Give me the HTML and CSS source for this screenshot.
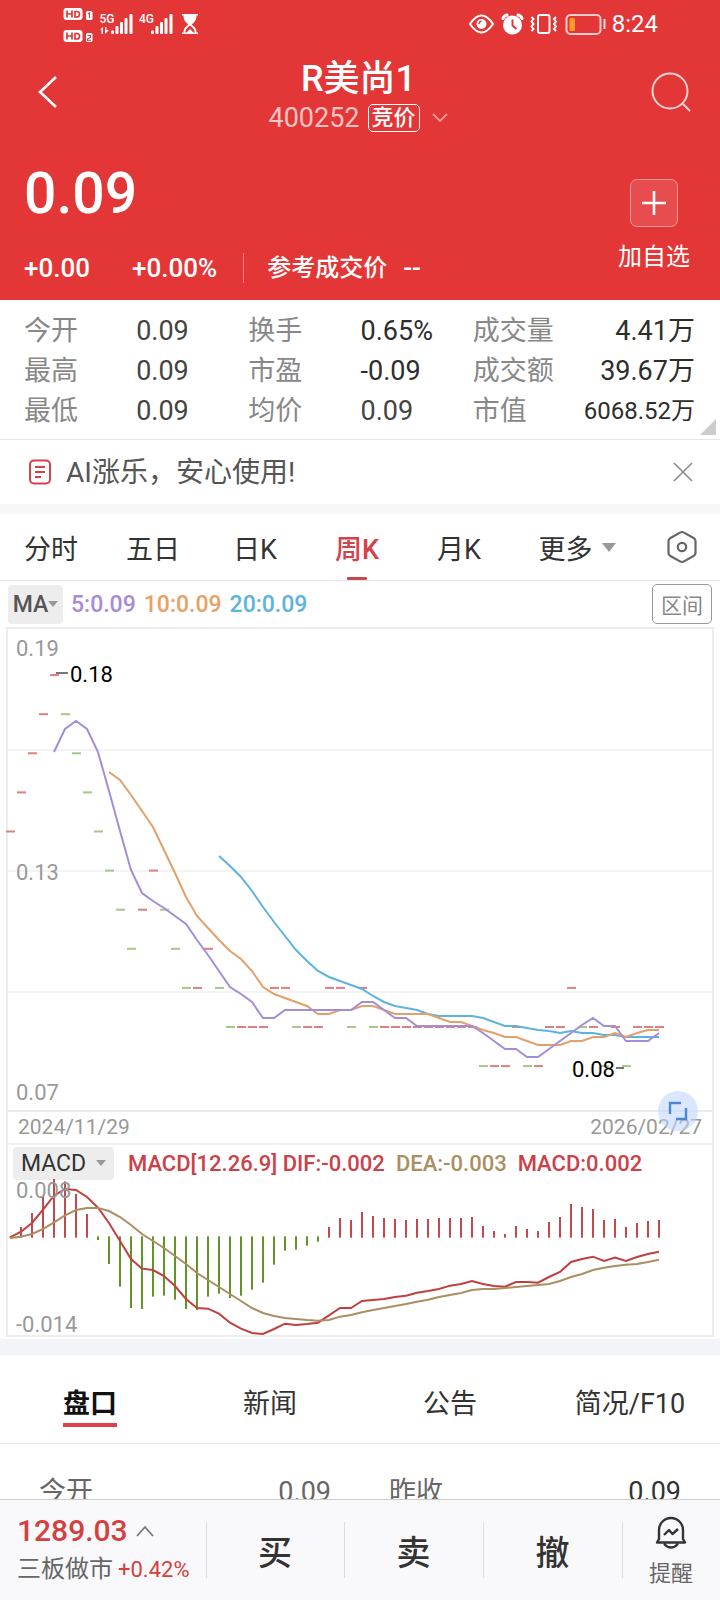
FILE: index.html
```html
<!DOCTYPE html>
<html lang="zh-CN">
<head>
<meta charset="utf-8">
<meta name="viewport" content="width=device-width, initial-scale=1">
<title>R美尚1 400252</title>
<link rel="stylesheet" href="styles.css">
</head>
<body>
<div class="app">
  <main class="content">
    <header class="hero">
      <div class="status">
        <svg class="status-left" width="136" height="40" viewBox="62 4 136 40" fill="#fff" role="img" aria-label="信号">
          <rect x="63.500" y="8" width="19" height="12" rx="3"/><rect x="63.500" y="30" width="19" height="12" rx="3"/>
          <path d="M67 10.500v7M72 10.500v7M67 14h5M75 11.500v5.500h1.500q3 0 3-2.800t-3-2.700zM67 32.500v7M72 32.500v7M67 36h5M75 33.500v5.500h1.500q3 0 3-2.800t-3-2.700z" fill="none" stroke="#e33637" stroke-width="1.700"/>
          <rect x="86" y="11" width="6.500" height="9" rx="1.500"/><rect x="86" y="33" width="6.500" height="9" rx="1.500"/>
          <path d="M88 14l1.500-1v5M87.500 35.500h3v2l-3 1.500v1.200h3.500" fill="none" stroke="#e33637" stroke-width="1.100"/>
          <text x="99.500" y="23" class="net">5G</text><text x="139" y="23" class="net">4G</text>
          <path d="M100 29.500l3-2.500v7h-1.500v-4.500zM105 27h1.500v3h2.500l-4 4z"/>
          <g><rect x="111" y="30.500" width="3" height="3.500" rx="1"/><rect x="115.500" y="26" width="3" height="8" rx="1"/><rect x="120" y="22" width="3" height="12" rx="1"/><rect x="124.500" y="18" width="3" height="16" rx="1"/><rect x="129.500" y="14" width="3" height="20" rx="1"/></g>
          <g><rect x="151" y="30.500" width="3" height="3.500" rx="1"/><rect x="155.500" y="26" width="3" height="8" rx="1"/><rect x="160" y="22" width="3" height="12" rx="1"/><rect x="164.500" y="18" width="3" height="16" rx="1"/><rect x="169.500" y="14" width="3" height="20" rx="1"/></g>
          <path d="M182 14h16v1.500h-1.500c0 5-2.500 7-4.800 9 2.300 2 4.800 3.500 4.800 8h1.500v1.500h-16v-1.500h1.500c0-4.500 2.500-6 4.800-8-2.300-2-4.800-4-4.800-9h-1.500z"/>
          <path d="M190 25.500c-2.500 2-4.500 3.500-4.800 7h1.300l3.500-3.500 3.500 3.500h1.300c-.3-3.500-2.300-5-4.800-7z" fill="#e33637"/>
        </svg>
        <div class="status-right">
          <svg width="140" height="24" viewBox="468 12 140 24" fill="none" stroke="#fff" stroke-width="2" role="img" aria-label="电量低">
            <path d="M470 24q11.500-17 23 0q-11.500 17-23 0z"/><circle cx="481.500" cy="24" r="5" fill="#fff" stroke="none"/><path d="M479 24q0-2.500 2.500-3" stroke="#e33637" stroke-width="1.300"/>
            <circle cx="512.500" cy="25" r="9.500" fill="#fff" stroke="none"/><path d="M512.500 19.500v6l4 3.500" stroke="#e33637"/><path d="M503 18.500q1-3 4-3.500M522 18.500q-1-3-4-3.500" stroke-width="3" stroke-linecap="round"/>
            <rect x="538" y="15" width="11.500" height="18" rx="2"/><path d="M531.500 17l2 2-2 2.500 2 2.500-2 2.500 2 2.500-2 2M556 17l-2 2 2 2.500-2 2.500 2 2.500-2 2.500 2 2"/>
            <rect x="566.500" y="15" width="34" height="19" rx="4" opacity=".75"/><rect x="569.500" y="18" width="5.500" height="13" rx="1.500" fill="#ff9b21" stroke="none"/><path d="M604.500 19v10" opacity=".8"/>
          </svg>
          <span>8:24</span>
        </div>
      </div>
      <div class="titlebar">
        <button class="icon-btn" aria-label="返回"><svg width="22" height="36" viewBox="0 0 22 36" fill="none" stroke="#fff" stroke-width="2.600"><path d="M19 3L3 18l16 15"/></svg></button>
        <div class="title">
          <h1>R美尚1</h1>
          <div class="code"><span>400252</span><span class="badge">竞价</span><svg width="18" height="12" viewBox="0 0 18 12" fill="none" stroke="#f39a9a" stroke-width="1.800"><path d="M2 2l7 7 7-7"/></svg></div>
        </div>
        <button class="icon-btn search" aria-label="搜索"><svg width="42" height="42" viewBox="0 0 42 42" fill="none" stroke="#fbd5d5" stroke-width="2"><circle cx="20" cy="20" r="17.500"/><path d="M33 33l7 7"/></svg></button>
      </div>
      <div class="quote">
        <div>
          <div class="price">0.09</div>
          <div class="change"><span>+0.00</span><span class="pct">+0.00%</span><span class="ref">参考成交价</span><span>--</span></div>
        </div>
        <button class="add"><span class="plus"><svg width="26" height="26" viewBox="0 0 26 26" stroke="#fff" stroke-width="2.600"><path d="M13 1v24M1 13h24"/></svg></span>加自选</button>
      </div>
    </header>

    <section class="stats">
      <dl>
        <dt>今开</dt><dd>0.09</dd><dt>换手</dt><dd class="dark">0.65%</dd><dt>成交量</dt><dd class="dark end">4.41万</dd>
        <dt>最高</dt><dd>0.09</dd><dt>市盈</dt><dd class="dark">-0.09</dd><dt>成交额</dt><dd class="dark end">39.67万</dd>
        <dt>最低</dt><dd>0.09</dd><dt>均价</dt><dd>0.09</dd><dt>市值</dt><dd class="dark end small">6068.52万</dd>
      </dl>
      <span class="corner"></span>
    </section>

    <section class="notice">
      <svg width="24" height="26" viewBox="0 0 24 26" fill="none" stroke="#d6404a" stroke-width="2"><rect x="2" y="1.500" width="20" height="23" rx="4"/><path d="M7 8h10M7 13h10M7 18h6"/></svg>
      <p>AI涨乐，安心使用!</p>
      <button class="icon-btn" aria-label="关闭"><svg width="20" height="20" viewBox="0 0 20 20" stroke="#8a8a8a" stroke-width="1.600"><path d="M1 1l18 18M19 1L1 19"/></svg></button>
    </section>

    <nav class="periods">
      <button>分时</button><button>五日</button><button>日K</button><button class="active">周K</button><button>月K</button>
      <button>更多<span class="tri"></span></button>
      <button aria-label="设置"><svg width="32" height="34" viewBox="0 0 32 34" fill="none" stroke="#666" stroke-width="2.200" stroke-linejoin="round"><path d="M16 2q1 0 2 .6l10 5.700q1.500 1 1.500 2.700v12q0 1.700-1.500 2.700l-10 5.700q-2 1.200-4 0l-10-5.700q-1.500-1-1.500-2.700V11q0-1.700 1.500-2.700l10-5.700q1-.6 2-.6z"/><circle cx="16" cy="17" r="4.200"/></svg></button>
    </nav>

    <section class="indicators">
      <button class="ma">MA<span class="tri"></span></button>
      <span class="m5">5:0.09</span><span class="m10">10:0.09</span><span class="m20">20:0.09</span>
      <button class="range">区间</button>
    </section>

    <section class="frame">
      <svg id="kline" class="kline" viewBox="8 630 704 481" role="img" aria-label="周K线"></svg>
      <button class="expand" aria-label="全屏"><svg width="20" height="20" viewBox="0 0 20 20" fill="none" stroke="#4f86d3" stroke-width="2.400"><path d="M2 13V2h11M8 18h10V7"/></svg></button>
      <div class="dates"><span>2024/11/29</span><span>2026/02/27</span></div>
      <div class="macd-head">
        <button>MACD<span class="tri"></span></button>
        <span class="dif">MACD[12.26.9] DIF:-0.002</span><span class="dea">DEA:-0.003</span><span class="macd">MACD:0.002</span>
      </div>
      <svg id="macd" class="macd-plot" viewBox="8 1182 704 154" role="img" aria-label="MACD"></svg>
    </section>

    <nav class="tabs">
      <button class="active"><span>盘口</span></button><button><span>新闻</span></button><button><span>公告</span></button><button><span>简况/F10</span></button>
    </nav>
    <dl class="book"><dt>今开</dt><dd>0.09</dd><dt class="second">昨收</dt><dd class="dark">0.09</dd></dl>
  </main>

  <footer class="bottom">
    <div class="index">
      <div class="index-value">1289.03<svg width="18" height="12" viewBox="0 0 18 12" fill="none" stroke="#777" stroke-width="1.800"><path d="M1 11l8-9 8 9"/></svg></div>
      <div class="index-name">三板做市<span>+0.42%</span></div>
    </div>
    <button>买</button><button>卖</button><button>撤</button>
    <button class="remind"><svg width="32" height="34" viewBox="0 0 32 34" fill="none" stroke="#333" stroke-width="2.400" stroke-linejoin="round"><path d="M4 23V14a12 12 0 0 1 24 0v9l2 3.500H2zM9 28q7 7 14 0M9 19l5-5 3.500 4 5.500-5"/></svg>提醒</button>
  </footer>
</div>
<script src="chart.js"></script>
</body>
</html>
```

FILE: styles.css
```css
* { box-sizing: border-box; }
body { margin: 0; background: #fff; color: #333; font-family: Roboto, "Noto Sans CJK SC", sans-serif; }
h1, p, dl, dd { margin: 0; }
button { margin: 0; padding: 0; border: 0; background: none; color: inherit; font: inherit; cursor: pointer; }
svg { display: block; }

.app { display: flex; flex-direction: column; height: 100vh; }
.content { flex: 1; min-height: 0; overflow: hidden; }

.hero { padding-bottom: 17px; background: #e33637; color: #fff; }
.status { display: flex; justify-content: space-between; align-items: center; height: 48px; padding: 0 62px; }
.status-right { display: flex; align-items: center; gap: 4px; font-size: 24px; line-height: 28px; }
.net { font-size: 12px; font-weight: 500; }
.titlebar { display: grid; grid-template-columns: 60px 1fr 72px; align-items: center; height: 88px; padding: 0 28px 0 37px; }
.icon-btn { display: flex; align-items: center; }
.search { justify-content: flex-end; }
.title { display: flex; flex-direction: column; align-items: center; padding-top: 7px; }
.title h1 { font-size: 36px; font-weight: 500; line-height: 44px; }
.code { display: flex; align-items: center; gap: 8px; font-size: 27px; line-height: 34px; color: #fbc4c4; }
.code svg { margin-left: 3px; }
.badge { padding: 0 3px; border: 1px solid #fff; border-radius: 5px; font-size: 22px; font-weight: 500; line-height: 26px; color: #fff; }
.quote { display: flex; justify-content: space-between; padding: 22px 30px 0 24px; }
.price { font-size: 57px; font-weight: 500; line-height: 72px; }
.change { display: flex; align-items: center; margin-top: 23px; font-size: 26px; font-weight: 500; line-height: 30px; }
.pct { margin-left: 42px; }
.ref { margin: 0 16px 0 26px; padding-left: 23px; border-left: 1px solid #ee8586; font-size: 24px; }
.add { display: flex; flex-direction: column; align-items: center; align-self: flex-start; gap: 14px; padding-top: 21px; font-size: 24px; line-height: 32px; }
.plus { display: grid; place-items: center; width: 48px; height: 48px; border: 1px solid #f19a9b; border-radius: 7px; background: #e74d4e; }

.stats { position: relative; padding: 11px 25px 8px 24px; border-bottom: 1px solid #e6e6e6; }
.stats dl { display: grid; grid-template-columns: 112fr 112fr 112fr 112fr 90fr 132fr; grid-auto-rows: 40px; line-height: 40px; }
.stats dt { font-size: 27px; color: #888; white-space: nowrap; }
.stats dd { font-size: 27px; color: #444; white-space: nowrap; }
.stats .dark { color: #2d2d2d; }
.stats .end { text-align: right; }
.stats .small { font-size: 24px; }
.corner { position: absolute; right: 4px; bottom: 4px; border-left: 16px solid transparent; border-bottom: 16px solid #ccc; }

.notice { display: flex; align-items: center; gap: 14px; height: 74px; padding: 0 27px 0 28px; border-bottom: 10px solid #f7f7f7; font-size: 28px; color: #555; }
.notice p { flex: 1; padding-top: 2px; line-height: 40px; }

.tri { display: inline-block; border: 7px solid transparent; border-top: 9px solid #999; border-bottom: 0; }
.periods { display: grid; grid-template-columns: repeat(5, 102fr) 134fr 76fr; height: 67px; border-bottom: 1px solid #e6e6e6; font-size: 27px; }
.periods button { position: relative; display: flex; align-items: center; justify-content: center; gap: 9px; }
.periods .active { color: #d8404a; font-weight: 500; }
.periods .active::after { content: ""; position: absolute; left: 50%; bottom: 0; width: 20px; height: 3px; margin-left: -10px; background: #cb4650; border-radius: 1px; }

.indicators { display: flex; align-items: center; gap: 8px; height: 46px; padding: 0 8px; font-size: 23px; font-weight: 500; }
.ma { display: flex; align-items: center; justify-content: center; width: 55px; height: 39px; border-radius: 4px; background: #ededed; font-size: 23px; color: #555; }
.ma .tri { border-width: 6px 5px 0; }
.m5 { color: #a78bd8; }
.m10 { color: #e9a066; }
.m20 { color: #5cb3de; }
.range { width: 60px; height: 40px; margin-left: auto; border: 1px solid #999; border-radius: 5px; font-size: 21px; font-weight: 400; color: #888; }

.frame { position: relative; margin: 0 6px; border: 2px solid #ededed; }
.frame svg { width: 100%; overflow: visible; }
.kline, .macd-plot { font-size: 22px; }
.axis { fill: #999; }
.mark { fill: #000; }
.grid { stroke: #f3f3f3; stroke-width: 2; }
.line { fill: none; stroke-width: 2; }
.frame .expand { position: absolute; right: 14px; top: 462px; display: grid; place-items: center; width: 40px; height: 40px; border-radius: 50%; background: rgba(190, 212, 250, .55); }
.frame .expand svg { width: 20px; }
.dates { display: flex; justify-content: space-between; padding: 0 10px; border-top: 2px solid #ededed; border-bottom: 2px solid #f1f1f1; font-size: 21px; line-height: 31px; color: #999; }
.macd-head { display: flex; align-items: center; gap: 14px; height: 36px; padding-left: 5px; font-size: 22px; font-weight: 500; }
.macd-head span + span { margin-left: -3px; }
.macd-head button { display: flex; align-items: center; justify-content: center; gap: 10px; width: 101px; height: 33px; border-radius: 4px; background: #ededed; font-weight: 400; font-size: 23px; }
.macd-head .tri { border-width: 6px 5px 0; }
.dif, .macd { color: #cc4048; }
.dea { color: #a98f62; }

.tabs { display: grid; grid-template-columns: repeat(4, 1fr); margin-top: 2px; height: 105px; border-top: 16px solid #f2f4f9; border-bottom: 1px solid #e9e9e9; font-size: 27px; }
.tabs button { padding-top: 13px; }
.tabs span { display: inline-block; border-bottom: 4px solid transparent; line-height: 38px; }
.tabs .active { font-weight: 700; color: #111; }
.tabs .active span { border-color: #de414b; }
.book { display: grid; grid-template-columns: 146fr 146fr 145fr 205fr; padding: 28px 39px 0; font-size: 27px; line-height: 40px; color: #666; white-space: nowrap; }
.book dd { text-align: right; }
.book .second { padding-left: 58px; }
.book .dark { color: #333; }

.bottom { display: grid; grid-template-columns: 206fr 138fr 139fr 139fr 98fr; flex: none; height: 101px; border-top: 1px solid #ccc; background: #f9f9fb; }
.bottom button { position: relative; font-size: 34px; font-weight: 500; }
.bottom button::before { content: ""; position: absolute; left: 0; top: 22px; bottom: 22px; width: 1px; background: #ddd; }
.index { padding: 11px 0 0 17px; white-space: nowrap; }
.index-value { display: flex; align-items: center; gap: 8px; font-size: 30px; font-weight: 500; line-height: 40px; color: #d53f3f; }
.index-name { font-size: 24px; line-height: 36px; color: #666; }
.index-name span { margin-left: 5px; font-size: 22px; color: #d53f3f; }
.bottom .remind { display: flex; flex-direction: column; align-items: center; gap: 8px; padding-top: 16px; font-size: 22px; font-weight: 400; line-height: 32px; color: #666; }
```

FILE: chart.js
```js
const X0 = 10, STEP = 11;
const NS = 'http://www.w3.org/2000/svg';

function add(svg, tag, attrs, text) {
  const el = document.createElementNS(NS, tag);
  for (const key in attrs) el.setAttribute(key, attrs[key]);
  if (text) el.textContent = text;
  svg.appendChild(el);
}
function line(svg, start, ys, color) {
  const points = ys.map((y, i) => (X0 + STEP * (start + i)) + ',' + y).join(' ');
  add(svg, 'polyline', { points, stroke: color, class: 'line' });
}

// Weekly closes in cents; a trailing "g" marks a falling week.
const closes = ('14 15 16 17 18 17g 16g 15g 14g 13g 12g 11g 12 13 12g 11g 10g 10 11 10g 9g 9 9 9 10 10 9g 9 9 10 10 9g 10 9g ' +
  '9 9 9 9 9 9 9 9 9 8g 8 8 9 8g 8 9 9 10 9g 9 8g 9 8g 9 9 9').split(' ');
const ma5 = [753, 730, 722, 730, 753, 792, 832, 871, 894, 902, 909, 917, 925, 941, 956, 972, 988, 995, 1003, 1019, 1019,
  1011, 1011, 1011, 1011, 1011, 1011, 1011, 1003, 1003, 1011, 1019, 1019, 1027, 1027, 1027, 1027, 1027, 1027, 1034, 1042,
  1050, 1050, 1058, 1058, 1050, 1042, 1034, 1026, 1019, 1027, 1027, 1042, 1042, 1042, 1034];
const ma10 = [773, 781, 796, 812, 828, 851, 874, 898, 917, 929, 941, 952, 960, 972, 988, 995, 999, 1003, 1007, 1015, 1015,
  1011, 1011, 1007, 1007, 1011, 1015, 1015, 1015, 1015, 1019, 1023, 1023, 1027, 1031, 1034, 1038, 1038, 1042, 1046, 1046,
  1046, 1042, 1042, 1038, 1038, 1034, 1038, 1034, 1031, 1031];
const ma20 = [857, 867, 878, 892, 908, 923, 937, 951, 962, 972, 978, 982, 986, 990, 997, 1003, 1007, 1009, 1011, 1015,
  1017, 1017, 1017, 1017, 1019, 1023, 1027, 1027, 1029, 1031, 1032, 1034, 1032, 1034, 1034, 1036, 1036, 1038, 1038, 1038, 1038];

const kline = document.getElementById('kline');
for (const y of [751, 872, 993]) add(kline, 'line', { x1: 8, x2: 712, y1: y, y2: y, class: 'grid' });
closes.forEach((c, i) => {
  const y = 1028 - (parseInt(c, 10) - 9) * 39.1;
  add(kline, 'rect', { x: X0 + STEP * i - 4, y: y - 1, width: 9, height: 2, fill: c.endsWith('g') ? '#a8c686' : '#dd8080' });
});
line(kline, 19, ma20, '#5cb3de');
line(kline, 9, ma10, '#e3a068');
line(kline, 4, ma5, '#a48dd8');
add(kline, 'text', { x: 16, y: 657, class: 'axis' }, '0.19');
add(kline, 'text', { x: 16, y: 881, class: 'axis' }, '0.13');
add(kline, 'text', { x: 16, y: 1101, class: 'axis' }, '0.07');
add(kline, 'rect', { x: 56, y: 673, width: 12, height: 2, fill: '#777' });
add(kline, 'text', { x: 70, y: 683, class: 'mark' }, '0.18');
add(kline, 'text', { x: 572, y: 1078, class: 'mark' }, '0.08');
add(kline, 'rect', { x: 616, y: 1068, width: 8, height: 2, fill: '#777' });

// MACD series in thirds of a unit below the top of the panel.
const bars = [325, 294, 252, 204, 150, 157, 195, 255, 333, 405, 473, 537, 540, 503, 500, 512, 540, 543, 503, 494, 507, 500,
  482, 461, 407, 365, 362, 350, 338, 294, 267, 273, 249, 261, 267, 270, 273, 270, 270, 267, 267, 267, 264, 291, 306, 315,
  291, 300, 306, 279, 264, 225, 234, 240, 273, 270, 294, 282, 276, 273];
const dif = [325, 308, 282, 242, 200, 180, 183, 204, 236, 282, 336, 390, 419, 423, 441, 471, 510, 537, 539, 554, 581, 599,
  612, 615, 600, 584, 588, 585, 581, 559, 537, 537, 516, 513, 510, 504, 500, 491, 486, 480, 470, 465, 456, 465, 471, 473,
  459, 459, 461, 444, 429, 399, 390, 383, 396, 386, 396, 384, 375, 368];
const dea = [327, 323, 315, 300, 280, 259, 243, 237, 237, 246, 264, 288, 315, 336, 357, 381, 405, 432, 453, 474, 495, 516,
  537, 552, 561, 567, 570, 573, 575, 573, 563, 558, 550, 543, 537, 531, 525, 518, 512, 504, 498, 492, 483, 480, 480, 477,
  474, 471, 468, 465, 456, 444, 435, 423, 416, 411, 407, 405, 399, 392];
const scale = v => 1130 + v / 3;

const macd = document.getElementById('macd');
bars.forEach((v, i) => {
  const up = v <= 325, zero = scale(up ? 326 : 322), y = scale(v);
  add(macd, 'rect', { x: X0 + STEP * i - 1, y: Math.min(y, zero), width: 2, height: Math.abs(zero - y), fill: up ? '#c4484c' : '#619526' });
});
line(macd, 0, dif.map(scale), '#c0403f');
line(macd, 0, dea.map(scale), '#a98f62');
add(macd, 'text', { x: 16, y: 1199, class: 'axis' }, '0.008');
add(macd, 'text', { x: 16, y: 1333, class: 'axis' }, '-0.014');
```
